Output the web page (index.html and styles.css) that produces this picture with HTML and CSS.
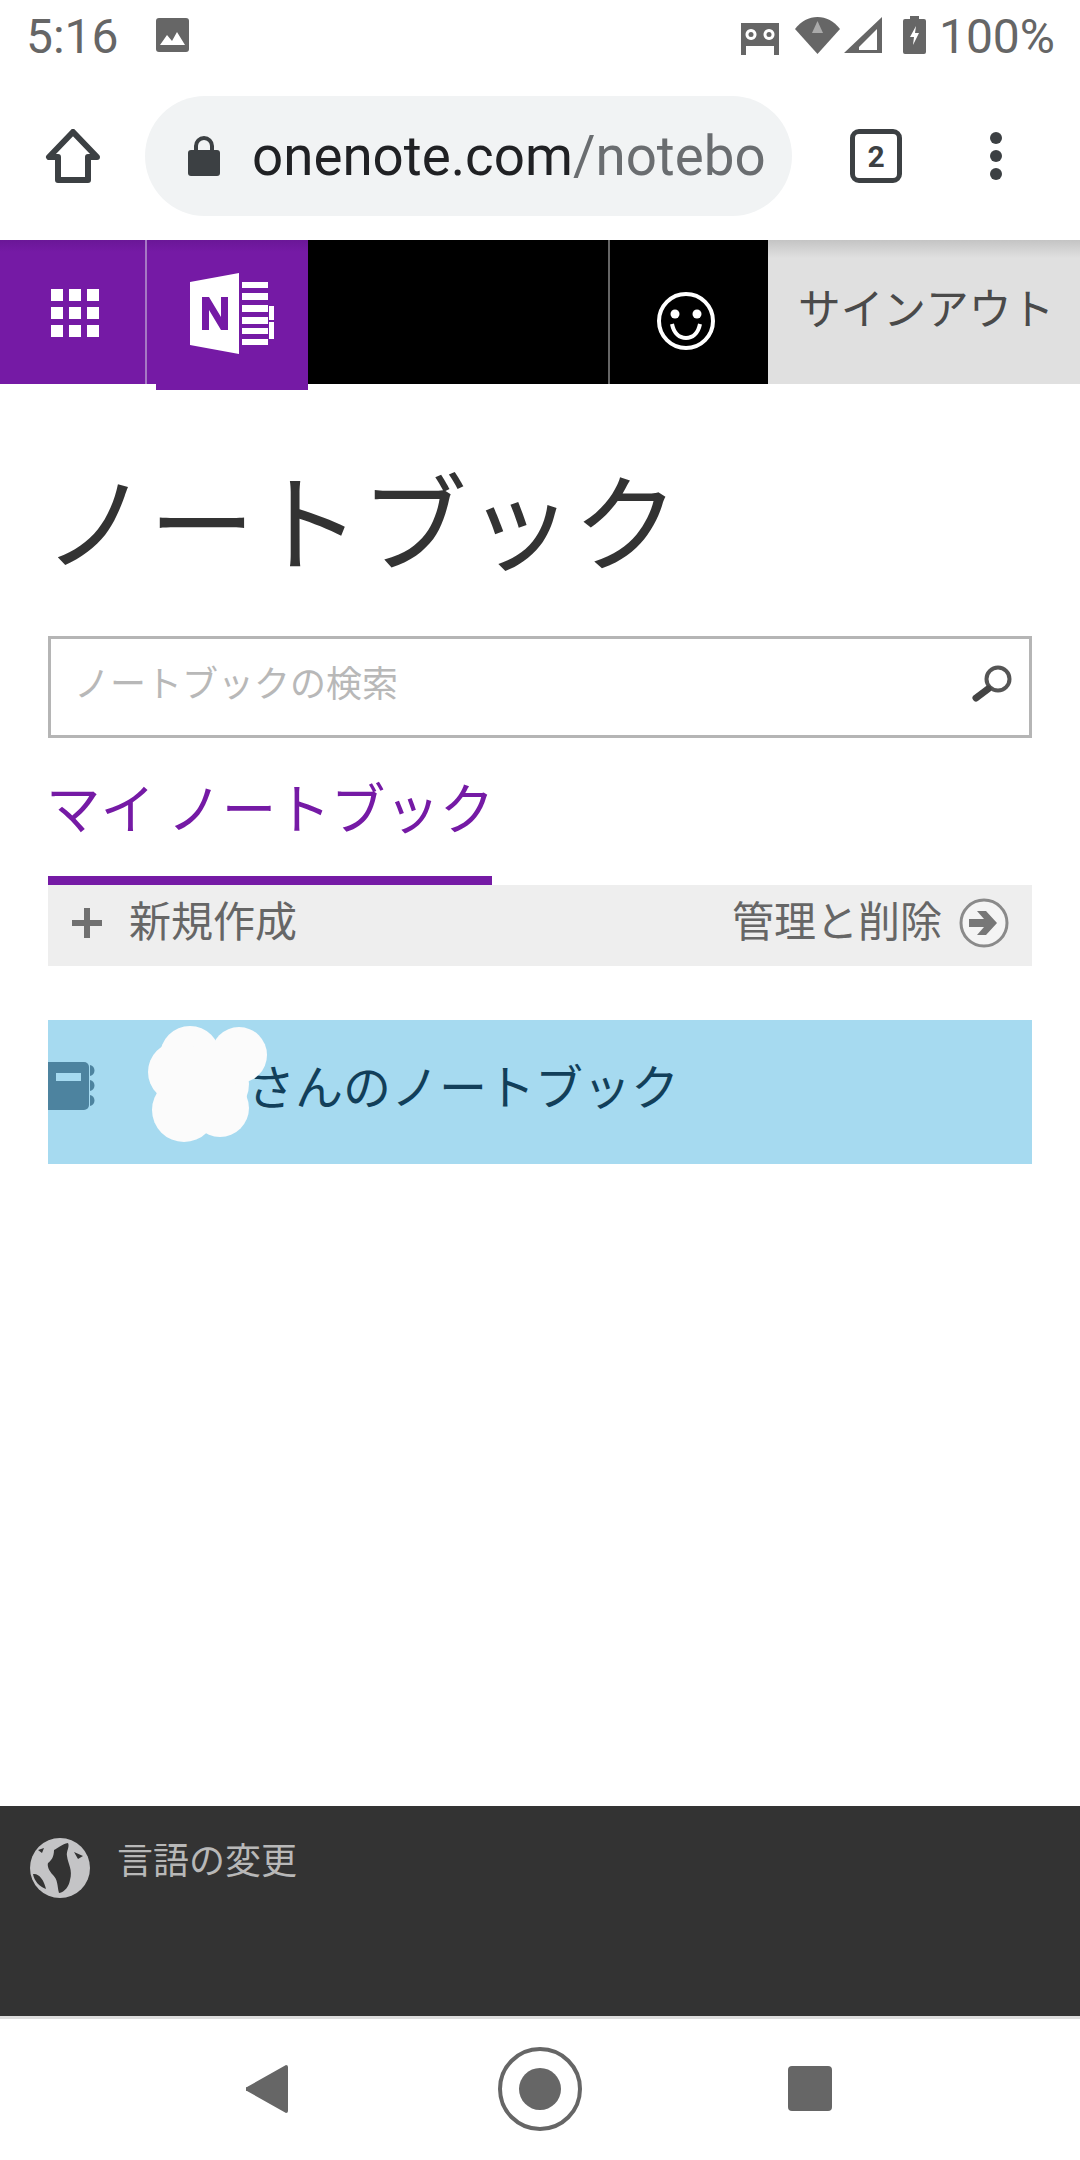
FILE: index.html
```html
<!DOCTYPE html>
<html lang="ja">
<head>
    <meta charset="UTF-8">
    <title>ノートブック</title>
    <link rel="stylesheet" href="styles.css">
</head>
<body>
    <div class="status-bar">
        <span class="time">5:16</span>
        <svg class="ic-image" viewBox="0 0 33 34"><rect width="33" height="34" rx="3" fill="#666"/><path d="M4 27 11 17l5 6 5-9 8 13z" fill="#fff"/></svg>
        <div class="status-right">
            <svg class="ic-voicemail" viewBox="0 0 38 32"><path fill-rule="evenodd" fill="#666" d="M0 0h38v32h-5V23H5v9H0zM10 6a5.5 5.5 0 1 0 .01 0zM28 6a5.500 5.500 0 1 0 .01 0z"/><circle cx="10" cy="11.500" r="2.500" fill="#666"/><circle cx="28" cy="11.500" r="2.500" fill="#666"/></svg>
            <svg class="ic-wifi" viewBox="0 0 45 37"><path d="M0 12C6 4 14 0 22.500 0S39 4 45 12L22.500 37z" fill="#666"/><path d="M22.500 4 28 16H17z" fill="#aaa"/></svg>
            <svg class="ic-signal" viewBox="0 0 38 36"><path fill-rule="evenodd" fill="#666" d="M38 0v36H0zM33 12 15 30v3h18z"/></svg>
            <svg class="ic-battery" viewBox="0 0 23 38"><path d="M7 0h9v3h5a2 2 0 0 1 2 2v31a2 2 0 0 1-2 2H2a2 2 0 0 1-2-2V5a2 2 0 0 1 2-2h5z" fill="#666"/><path d="M13 10 7 21h4l-1 8 6-12h-4z" fill="#fff"/></svg>
            <span class="battery-text">100%</span>
        </div>
    </div>

    <div class="browser-bar">
        <svg class="ic-home" viewBox="0 0 56 54"><path d="M28 3 4 28h9v23h30V28h9z" fill="none" stroke="#3c4043" stroke-width="6" stroke-linejoin="round"/></svg>
        <div class="omnibox">
            <svg class="ic-lock" viewBox="0 0 32 40"><path d="M8 16V10a8 8 0 0 1 16 0v6" fill="none" stroke="#3c4043" stroke-width="4"/><rect y="14" width="32" height="26" rx="3" fill="#3c4043"/></svg>
            <span class="url">onenote.com<span class="url-path">/notebo</span></span>
        </div>
        <div class="tab-count">2</div>
        <div class="menu-dots"><i></i><i></i><i></i></div>
    </div>

    <nav class="app-header">
        <div class="waffle">
            <div class="waffle-grid"><i></i><i></i><i></i><i></i><i></i><i></i><i></i><i></i><i></i></div>
        </div>
        <div class="app-tile">
            <svg class="ic-onenote" viewBox="0 0 84 82"><path d="M0 9 49 0v81L0 72z" fill="#fff"/><path d="M12 57V24h7l12 20V24h7v33h-7L19 37v20z" fill="#751aa5"/><path fill="#fff" d="M52 9h26v6H52zM52 20h26v7H52zM52 32h26v7H52zM52 44h26v7H52zM52 55h26v6H52zM52 66h26v6H52zM79 33h5v14h-5zM79 49h5v17h-5z"/></svg>
        </div>
        <div class="header-black"></div>
        <div class="account">
            <svg class="ic-smiley" viewBox="0 0 60 60"><circle cx="30" cy="30" r="27" fill="none" stroke="#fff" stroke-width="4"/><circle cx="19" cy="23" r="4.500" fill="#fff"/><circle cx="41" cy="23" r="4.500" fill="#fff"/><path d="M16 33c2 10 8 14 14 14s12-4 14-14" fill="none" stroke="#fff" stroke-width="4"/></svg>
        </div>
        <div class="sign-out">サインアウト</div>
    </nav>

    <main class="content">
        <h1 class="page-title">ノートブック</h1>
        <div class="search-box">
            <span class="search-hint">ノートブックの検索</span>
            <svg class="ic-search" viewBox="0 0 42 40"><circle cx="27" cy="15" r="11.500" fill="none" stroke="#555" stroke-width="4"/><path d="M17 25 5 34" stroke="#444" stroke-width="7" stroke-linecap="round"/></svg>
        </div>
        <div class="tabs"><span class="tab-active">マイ ノートブック</span></div>
        <div class="tools">
            <div class="tool">
                <svg class="ic-plus" viewBox="0 0 30 30"><path d="M12 0h6v12h12v6H18v12h-6V18H0v-6h12z" fill="#707070"/></svg>
                <span class="tool-label">新規作成</span>
            </div>
            <div class="tool">
                <span class="tool-label">管理と削除</span>
                <svg class="ic-arrow" viewBox="0 0 50 50"><circle cx="25" cy="25" r="23" fill="#f4f4f4" stroke="#8a8a8a" stroke-width="3"/><path d="M10 21h15l-7-8h9l11 12-11 12h-9l7-8H10z" fill="#777"/></svg>
            </div>
        </div>
        <div class="notebook-row">
            <svg class="ic-notebook" viewBox="0 0 48 48"><path d="M0 0h36a5 5 0 0 1 5 5v38a5 5 0 0 1-5 5H0z" fill="#4d839f"/><rect x="8" y="11" width="25" height="8" fill="#a6daf0"/><path fill="#4d839f" d="M42 3c6 1 6 10 0 11zM42 18c6 1 6 10 0 11zM42 33c6 1 6 10 0 11z"/></svg>
            <span class="notebook-name">さんのノートブック</span>
            <svg class="scribble" viewBox="0 0 120 116"><g fill="#fbfbfb"><circle cx="42" cy="30" r="30"/><circle cx="91" cy="29" r="28"/><circle cx="30" cy="46" r="30"/><circle cx="65" cy="58" r="36"/><circle cx="36" cy="84" r="32"/><circle cx="72" cy="82" r="29"/></g></svg>
        </div>
    </main>

    <footer class="site-footer">
        <svg class="ic-globe" viewBox="0 0 60 60"><circle cx="30" cy="30" r="30" fill="#c4c4c6"/><path fill="#333" d="M24 12c4-2 8-6 14-7 2 4-2 8-1 13 1 8 6 14 3 24-1 6-5 12-11 13-2-8-1-13-6-18-4-4-6-9-5-12 3-2 6-6 6-13zM3 36c6-1 11 6 13 15-6-2-12-8-13-15zM44 14l9 4-5 3zM8 12l6-2-2 5z"/></svg>
        <span class="lang-link">言語の変更</span>
    </footer>

    <div class="nav-bar">
        <svg class="ic-back" viewBox="0 0 42 48"><path d="M40 0a2 2 0 0 1 2 2v44a2 2 0 0 1-2 2L1 26a2 2 0 0 1 0-4z" fill="#666"/></svg>
        <svg class="ic-home-nav" viewBox="0 0 84 84"><circle cx="42" cy="42" r="40" fill="none" stroke="#666" stroke-width="4"/><circle cx="42" cy="42" r="21" fill="#666"/></svg>
        <div class="ic-stop"></div>
    </div>
</body>
</html>
```

FILE: styles.css
```css
* {
    box-sizing: border-box;
}

body {
    margin: 0;
    width: 1080px;
    height: 2160px;
    display: flex;
    flex-direction: column;
    background: #fff;
    font-family: "Noto Sans CJK JP", "Noto Sans", sans-serif;
    overflow: hidden;
}

svg {
    display: block;
    flex: none;
}

/* android status bar */
.status-bar {
    height: 70px;
    padding: 2px 25px 0 26px;
    display: flex;
    align-items: center;
    color: #666;
    font-family: Roboto, sans-serif;
    font-size: 48px;
}

.ic-image {
    width: 33px;
    height: 34px;
    margin-left: 37px;
    margin-bottom: 2px;
}

.status-right {
    margin-left: auto;
    display: flex;
    align-items: center;
}

.ic-voicemail {
    width: 38px;
    height: 32px;
    margin-top: 6px;
}

.ic-wifi {
    width: 45px;
    height: 37px;
    margin-left: 16px;
    margin-bottom: 2px;
}

.ic-signal {
    width: 38px;
    height: 36px;
    margin-left: 4px;
    margin-bottom: 2px;
}

.ic-battery {
    width: 23px;
    height: 38px;
    margin-left: 21px;
    margin-bottom: 2px;
}

.battery-text {
    margin-left: 13px;
}

/* chrome toolbar */
.browser-bar {
    height: 170px;
    padding: 2px 0 0 45px;
    display: flex;
    align-items: center;
}

.ic-home {
    width: 56px;
    height: 54px;
}

.omnibox {
    width: 647px;
    height: 120px;
    margin-left: 44px;
    padding-left: 43px;
    border-radius: 60px;
    background: #f1f3f4;
    display: flex;
    align-items: center;
    font-family: Roboto, sans-serif;
    font-size: 54.700px;
    color: #202124;
    overflow: hidden;
    white-space: nowrap;
}

.ic-lock {
    width: 32px;
    height: 40px;
}

.url {
    margin-left: 32px;
}

.url-path {
    color: #6a6d70;
}

.tab-count {
    width: 52px;
    height: 54px;
    margin-left: 58px;
    border: 5px solid #3c4043;
    border-radius: 9px;
    display: flex;
    align-items: center;
    justify-content: center;
    font-family: Roboto, sans-serif;
    font-size: 30px;
    font-weight: 700;
    color: #3c4043;
}

.menu-dots {
    height: 48px;
    margin-left: 88px;
    display: flex;
    flex-direction: column;
    justify-content: space-between;
}

.menu-dots i {
    display: block;
    width: 12px;
    height: 12px;
    border-radius: 50%;
    background: #3c4043;
}

/* onenote header */
.app-header {
    height: 144px;
    display: flex;
    flex: none;
}

.waffle {
    width: 145px;
    padding: 2px 0 0 5px;
    background: linear-gradient(#6a1797, #751aa5 12px);
    display: flex;
    align-items: center;
    justify-content: center;
}

.waffle-grid {
    display: grid;
    grid-template-columns: repeat(3, 12px);
    gap: 6px;
}

.waffle-grid i {
    height: 12px;
    background: #fff;
}

.app-tile {
    width: 163px;
    border-left: 2px solid #a678c4;
    background: linear-gradient(#6a1797, #751aa5 12px);
    position: relative;
    display: flex;
    align-items: center;
    padding: 4px 0 0 43px;
}

/* the little tab hanging under the tile */
.app-tile::after {
    content: "";
    position: absolute;
    left: 9px;
    right: 0;
    top: 100%;
    height: 6px;
    background: #751aa5;
}

.ic-onenote {
    width: 84px;
    height: 82px;
}

.header-black {
    width: 300px;
    background: #000;
}

.account {
    width: 160px;
    border-left: 2px solid #666;
    background: #000;
    display: flex;
    align-items: center;
    justify-content: center;
    padding-top: 18px;
}

.ic-smiley {
    width: 60px;
    height: 60px;
    margin-left: -6px;
}

.sign-out {
    flex: 1;
    padding: 0 0 12px 30px;
    display: flex;
    align-items: center;
    background: linear-gradient(#c4c4c4, #e0e0e0 18px);
    color: #4a4a4a;
    font-size: 42.700px;
    white-space: nowrap;
}

/* page body */
.content {
    flex: 1;
    padding: 0 48px;
}

.page-title {
    margin: 68px 0 54px -5px;
    font-size: 106px;
    font-weight: 400;
    line-height: 130px;
    color: #333;
}

.search-box {
    height: 102px;
    padding: 0 16px 0 23px;
    border: 3px solid #b5b5b5;
    display: flex;
    align-items: center;
    justify-content: space-between;
}

.search-hint {
    margin-bottom: 12px;
    font-size: 36px;
    color: #b8b8b8;
}

.ic-search {
    width: 42px;
    height: 40px;
    margin-bottom: 6px;
}

.tabs {
    margin-top: 33px;
    display: flex;
}

.tab-active {
    height: 114px;
    width: 444px;
    border-bottom: 9px solid #751aa5;
    font-size: 54.500px;
    line-height: 70px;
    text-indent: -2px;
    color: #751aa5;
    white-space: nowrap;
}

.tools {
    height: 81px;
    padding: 0 23px 6px 24px;
    background: #eee;
    display: flex;
    align-items: center;
    justify-content: space-between;
    font-size: 42px;
    color: #666;
}

.tool {
    display: flex;
    align-items: center;
}

.tool-label {
    margin-bottom: 8px;
}

.ic-plus {
    width: 30px;
    height: 30px;
    margin-right: 27px;
}

.ic-arrow {
    width: 50px;
    height: 50px;
    margin-left: 17px;
}

.notebook-row {
    height: 144px;
    margin-top: 54px;
    background: #a6daf0;
    position: relative;
    display: flex;
    align-items: center;
    font-size: 48px;
    color: #123f5a;
}

.ic-notebook {
    width: 48px;
    height: 48px;
    margin-bottom: 12px;
}

.notebook-name {
    margin-left: 151px;
    margin-bottom: 16px;
}

/* name painted out in the screenshot */
.scribble {
    position: absolute;
    left: 100px;
    top: 6px;
    width: 120px;
    height: 116px;
}

/* footer */
.site-footer {
    height: 210px;
    padding: 32px 0 0 30px;
    background: #333;
    display: flex;
    align-items: flex-start;
    flex: none;
}

.ic-globe {
    width: 60px;
    height: 60px;
}

.lang-link {
    margin: -5px 0 0 27px;
    font-size: 36px;
    line-height: 50px;
    color: #b8b8b8;
}

/* android nav bar */
.nav-bar {
    height: 144px;
    flex: none;
    border-top: 3px solid #ddd;
    display: flex;
    align-items: center;
    padding: 0 248px 2px 246px;
    justify-content: space-between;
}

.ic-back {
    width: 42px;
    height: 48px;
}

.ic-home-nav {
    width: 84px;
    height: 84px;
    margin-left: 4px;
}

.ic-stop {
    width: 44px;
    height: 45px;
    border-radius: 4px;
    background: #666;
}
```
